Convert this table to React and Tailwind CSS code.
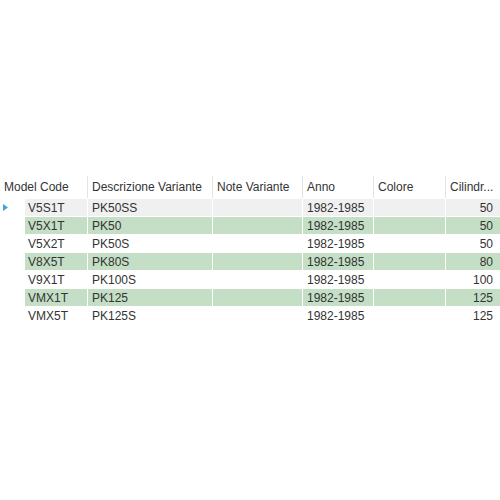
import React from 'react';

const rows = [
  { code: 'V5S1T', desc: 'PK50SS', anno: '1982-1985', cil: '50', tone: 'gray', current: true },
  { code: 'V5X1T', desc: 'PK50', anno: '1982-1985', cil: '50', tone: 'green' },
  { code: 'V5X2T', desc: 'PK50S', anno: '1982-1985', cil: '50', tone: 'white' },
  { code: 'V8X5T', desc: 'PK80S', anno: '1982-1985', cil: '80', tone: 'green' },
  { code: 'V9X1T', desc: 'PK100S', anno: '1982-1985', cil: '100', tone: 'white' },
  { code: 'VMX1T', desc: 'PK125', anno: '1982-1985', cil: '125', tone: 'green' },
  { code: 'VMX5T', desc: 'PK125S', anno: '1982-1985', cil: '125', tone: 'white' },
];

const toneClass = {
  gray: 'bg-[#f0f0f0]',
  green: 'bg-[#c4dfc6]',
  white: 'bg-white',
};

const Header = ({ w, children, first }) => (
  <div className={`${w} h-[22px] flex items-center pl-[4px] ${first ? '' : 'border-l border-[#e3e3e3]'}`}>
    {children}
  </div>
);

export default function App() {
  return (
    <div
      className="w-[500px] h-[500px] bg-white pt-[176px] text-[12px] text-[#333] overflow-hidden"
      style={{ fontFamily: '"Liberation Sans", Arial, sans-serif' }}
    >
      <div className="flex mb-[1px]">
        <Header w="w-[87px]" first>Model Code</Header>
        <Header w="w-[125px]">Descrizione Variante</Header>
        <Header w="w-[90px]">Note Variante</Header>
        <Header w="w-[71px]">Anno</Header>
        <Header w="w-[72px]">Colore</Header>
        <Header w="w-[55px]">Cilindr...</Header>
      </div>
      {rows.map((r) => {
        const bg = toneClass[r.tone];
        return (
          <div key={r.code} className="flex h-[18px]">
            <div className="w-[25px] h-[17px] flex items-center pl-[3px]">
              {r.current && (
                <svg width="5" height="7" viewBox="0 0 5 7">
                  <path d="M0 0 L5 3.5 L0 7 Z" fill="#3aa5d8" />
                </svg>
              )}
            </div>
            <div className={`w-[62px] h-[17px] ${bg} flex items-center pl-[3px]`}>{r.code}</div>
            <div className={`w-[124px] h-[17px] ${bg} ml-[1px] flex items-center pl-[4px]`}>{r.desc}</div>
            <div className={`w-[89px] h-[17px] ${bg} ml-[1px]`} />
            <div className={`w-[70px] h-[17px] ${bg} ml-[1px] flex items-center pl-[4px]`}>{r.anno}</div>
            <div className={`w-[71px] h-[17px] ${bg} ml-[1px]`} />
            <div className={`w-[54px] h-[17px] ${bg} ml-[1px] flex items-center justify-end pr-[7px]`}>{r.cil}</div>
          </div>
        );
      })}
    </div>
  );
}
